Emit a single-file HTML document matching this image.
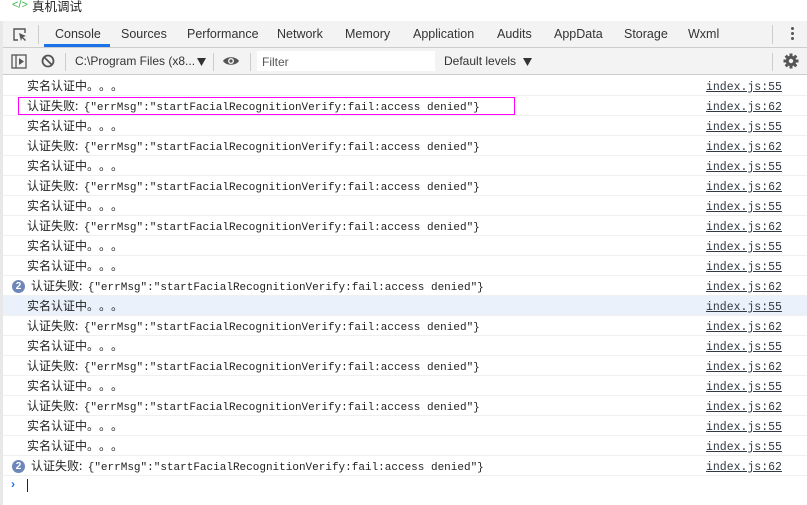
<!DOCTYPE html>
<html><head><meta charset="utf-8"><style>
*{margin:0;padding:0;box-sizing:border-box}
body{width:807px;height:505px;overflow:hidden;background:#fff;font-family:"Liberation Sans","Noto Sans CJK SC",sans-serif;font-size:12px;color:#333;position:relative}
.abs{position:absolute}
.title{left:0;top:0;width:807px;height:21px;background:#fff}
.tabs{left:3px;top:21px;width:804px;height:27px;background:#f3f3f3;border-bottom:1px solid #ccc}
.tab{position:absolute;top:6px;font-size:12.5px;color:#333}
.tb{left:3px;top:48px;width:804px;height:27px;background:#f3f3f3;border-bottom:1px solid #ccc}
.row{position:absolute;left:3px;width:804px;height:20px;border-bottom:1px solid #f0f0f0}
.row .m{position:absolute;left:24px;top:0;line-height:20px;font-size:12px;color:#222;white-space:pre;font-family:"Noto Sans CJK SC",sans-serif}
.d{display:inline-block;width:12px;text-align:center}
.mono{font-family:"Liberation Mono","DejaVu Sans Mono",monospace;font-size:11px}
.row .l{position:absolute;left:703px;top:2px;line-height:20px;font-family:"Liberation Mono",monospace;font-size:11.5px;color:#303942;text-decoration:underline}
.badge{position:absolute;left:9px;top:4px;width:13px;height:13px;border-radius:50%;background:#6e86b8;color:#fff;font-size:10px;font-weight:bold;text-align:center;line-height:13px;font-family:"Liberation Sans",sans-serif}
.sep{position:absolute;width:1px;background:#ccc}
</style></head><body>
<div class="abs" style="left:0;top:20px;width:3px;height:485px;background:#e8e8e8"></div>
<div class="abs title">
<span class="abs" style="left:12px;top:-1px;color:#3cb34a;font-size:11px">&lt;/&gt;</span>
<span class="abs" style="left:32px;top:-4px;font-size:12.5px;color:#222;font-family:'Noto Sans CJK SC',sans-serif">真机调试</span>
</div>
<div class="abs tabs">
<svg class="abs" style="left:9px;top:6px" width="16" height="16" viewBox="0 0 16 16"><path d="M6 13H2V2h11v4" fill="none" stroke="#555" stroke-width="1.4"/><path d="M7 6l7 3-3 1 3 3-1 1-3-3-1 3z" fill="#555"/></svg>
<div class="sep" style="left:35px;top:4px;height:19px"></div>
<span class="tab" style="left:52px">Console</span>
<div class="abs" style="left:41px;top:23px;width:66px;height:3px;background:#1a73e8"></div>
<span class="tab" style="left:118px">Sources</span>
<span class="tab" style="left:184px">Performance</span>
<span class="tab" style="left:274px">Network</span>
<span class="tab" style="left:342px">Memory</span>
<span class="tab" style="left:410px">Application</span>
<span class="tab" style="left:494px">Audits</span>
<span class="tab" style="left:551px">AppData</span>
<span class="tab" style="left:621px">Storage</span>
<span class="tab" style="left:685px">Wxml</span>
<div class="sep" style="left:769px;top:4px;height:19px"></div>
<div class="abs" style="left:788px;top:6px;width:3px;height:3px;background:#555;border-radius:50%"></div>
<div class="abs" style="left:788px;top:11px;width:3px;height:3px;background:#555;border-radius:50%"></div>
<div class="abs" style="left:788px;top:16px;width:3px;height:3px;background:#555;border-radius:50%"></div>
</div>
<div class="abs tb">
<svg class="abs" style="left:8px;top:6px" width="16" height="15" viewBox="0 0 16 15"><rect x="1" y="1" width="14" height="13" fill="none" stroke="#555" stroke-width="1.3"/><line x1="5" y1="1" x2="5" y2="14" stroke="#555" stroke-width="1.3"/><path d="M8 4l5 3.5-5 3.5z" fill="#555"/></svg>
<svg class="abs" style="left:38px;top:6px" width="14" height="14" viewBox="0 0 14 14"><circle cx="7" cy="7" r="5.5" fill="none" stroke="#555" stroke-width="1.8"/><line x1="3" y1="3" x2="11" y2="11" stroke="#555" stroke-width="1.8"/></svg>
<div class="sep" style="left:62px;top:5px;height:18px"></div>
<span class="abs" style="left:72px;top:6px;font-size:12px;color:#333">C:\Program Files (x8...</span>
<svg class="abs" style="left:194px;top:10px" width="9" height="8"><path d="M0 0h9L4.5 8z" fill="#333"/></svg>
<div class="sep" style="left:210px;top:5px;height:18px"></div>
<svg class="abs" style="left:219px;top:7px" width="18" height="12" viewBox="0 0 18 12"><path d="M1 6C4 1 14 1 17 6C14 11 4 11 1 6z" fill="#555"/><circle cx="9" cy="6" r="3" fill="#f3f3f3"/><circle cx="9" cy="6" r="1.6" fill="#555"/></svg>
<div class="sep" style="left:247px;top:5px;height:18px"></div>
<div class="abs" style="left:254px;top:3px;width:178px;height:20px;background:#fff"></div>
<span class="abs" style="left:259px;top:7px;font-size:12px;color:#555">Filter</span>
<span class="abs" style="left:441px;top:6px;font-size:12px;color:#333">Default levels</span>
<svg class="abs" style="left:520px;top:10px" width="9" height="8"><path d="M0 0h9L4.5 8z" fill="#333"/></svg>
<div class="sep" style="left:769px;top:5px;height:18px"></div>
<svg class="abs" style="left:780px;top:5px" width="16" height="16" viewBox="0 0 16 16"><g fill="#555"><circle cx="8" cy="8" r="5.2"/><rect x="6.5" y="0.5" width="3" height="15"/><rect x="0.5" y="6.5" width="15" height="3"/><rect x="6.5" y="0.5" width="3" height="15" transform="rotate(45 8 8)"/><rect x="6.5" y="0.5" width="3" height="15" transform="rotate(-45 8 8)"/></g><circle cx="8" cy="8" r="2.2" fill="#f3f3f3"/></svg>
</div>

<div id="rows"></div>
<div class="abs" style="left:18px;top:97px;width:497px;height:18px;border:1px solid #f0f"></div>
<span class="abs" style="left:11px;top:477px;color:#1a73e8;font-size:12px;font-weight:bold">›</span>
<div class="abs" style="left:27px;top:479px;width:1px;height:13px;background:#222"></div>

<script>
var A='<span class="m">实名认证中<span class="d">。</span><span class="d">。</span><span class="d">。</span></span><span class="l">index.js:55</span>';
var B='<span class="m">认证失败:  <span class="mono">{"errMsg":"startFacialRecognitionVerify:fail:access denied"}</span></span><span class="l">index.js:62</span>';
var C='<span class="badge">2</span><span class="m" style="left:28px">认证失败:  <span class="mono">{"errMsg":"startFacialRecognitionVerify:fail:access denied"}</span></span><span class="l">index.js:62</span>';
var seq=[A,B,A,B,A,B,A,B,A,A,C,A,B,A,B,A,B,A,A,C];
var h='';
for(var i=0;i<seq.length;i++){h+='<div class="row" style="top:'+(76+i*20)+'px;'+(i==11?'background:#eaf1fb':'')+'">'+seq[i]+'</div>';}
document.getElementById('rows').innerHTML=h;
</script>
</body></html>
